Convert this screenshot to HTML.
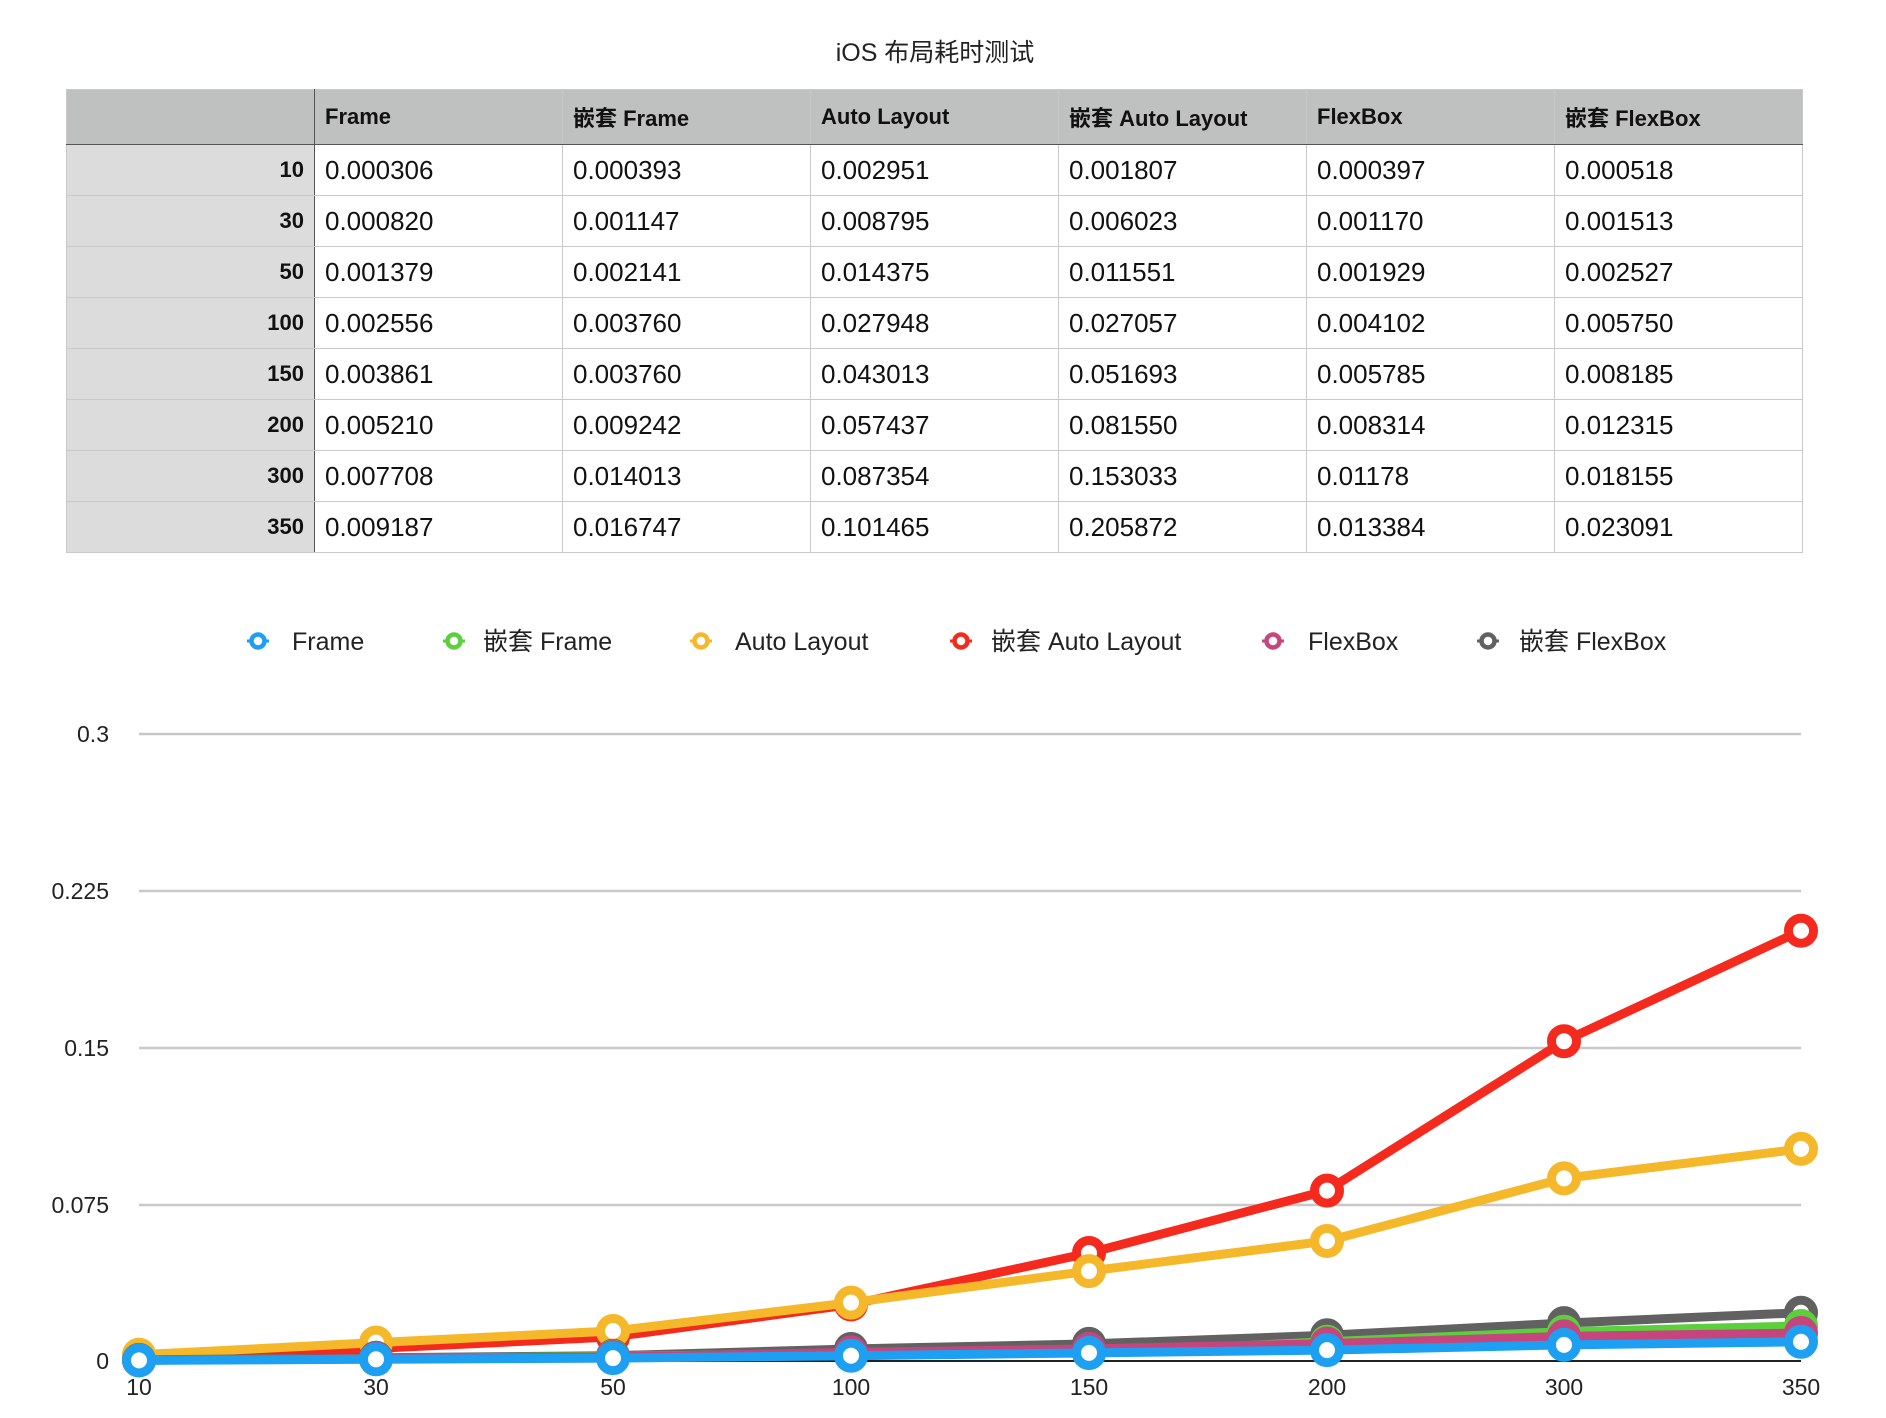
<!DOCTYPE html>
<html><head><meta charset="utf-8"><style>
body{margin:0;width:1886px;height:1418px;background:#fff;font-family:"Liberation Sans","Noto Sans CJK SC",sans-serif;position:relative;overflow:hidden}
.title{position:absolute;top:33px;left:0;width:1870px;text-align:center;font-size:25px;color:#222}
table{position:absolute;left:66px;top:89px;border-collapse:collapse;table-layout:fixed}
td{border:1px solid #c9c9c9;height:50px;font-size:26px;color:#111;padding:0 0 0 10px;width:237px}
td.r{background:#dcdcdc;text-align:right;padding:0 10px 0 0;font-weight:bold;font-size:22px;width:237px;border-right:1.5px solid #555}
tr.h td{background:#bfc1c0;height:54px;font-weight:bold;font-size:22px;border-bottom:1.5px solid #555;vertical-align:middle}
svg{position:absolute;left:0;top:0}
</style></head><body>
<div class="title">iOS 布局耗时测试</div>
<table id="t"></table>
<svg id="s" width="1886" height="1418" font-family="Liberation Sans, Noto Sans CJK SC, sans-serif"></svg>
<script>
var heads=["Frame","嵌套 Frame","Auto Layout","嵌套 Auto Layout","FlexBox","嵌套 FlexBox"];
var xs=[10,30,50,100,150,200,300,350];
var d=[[0.000306,0.000393,0.002951,0.001807,0.000397,0.000518],
[0.000820,0.001147,0.008795,0.006023,0.001170,0.001513],
[0.001379,0.002141,0.014375,0.011551,0.001929,0.002527],
[0.002556,0.003760,0.027948,0.027057,0.004102,0.005750],
[0.003861,0.003760,0.043013,0.051693,0.005785,0.008185],
[0.005210,0.009242,0.057437,0.081550,0.008314,0.012315],
[0.007708,0.014013,0.087354,0.153033,0.01178,0.018155],
[0.009187,0.016747,0.101465,0.205872,0.013384,0.023091]];
var s=["0.000306","0.000393","0.002951","0.001807","0.000397","0.000518","0.000820","0.001147","0.008795","0.006023","0.001170","0.001513","0.001379","0.002141","0.014375","0.011551","0.001929","0.002527","0.002556","0.003760","0.027948","0.027057","0.004102","0.005750","0.003861","0.003760","0.043013","0.051693","0.005785","0.008185","0.005210","0.009242","0.057437","0.081550","0.008314","0.012315","0.007708","0.014013","0.087354","0.153033","0.01178","0.018155","0.009187","0.016747","0.101465","0.205872","0.013384","0.023091"];
var h='<tr class="h"><td class="r" style="background:#bfc1c0"></td>';
heads.forEach(function(x){h+='<td>'+x+'</td>'});h+='</tr>';
for(var i=0;i<8;i++){h+='<tr><td class="r">'+xs[i]+'</td>';for(var j=0;j<6;j++)h+='<td>'+s[i*6+j]+'</td>';h+='</tr>';}
document.getElementById('t').innerHTML=h;
var cols=["#1d9ff2","#5ccf3c","#f4b82a","#f52a1e","#c6457c","#616161"];
var g='';
var gl=[[734,"0.3"],[891,"0.225"],[1048,"0.15"],[1205,"0.075"]];
gl.forEach(function(a){g+='<line x1="139" x2="1801" y1="'+a[0]+'" y2="'+a[0]+'" stroke="#c8c8c8" stroke-width="2.5"/><text x="109" y="'+(a[0]+8)+'" text-anchor="end" font-size="23" fill="#222">'+a[1]+'</text>'});
g+='<line x1="139" x2="1801" y1="1361" y2="1361" stroke="#222" stroke-width="2"/><text x="109" y="1369" text-anchor="end" font-size="23" fill="#222">0</text>';
var px=[139,376,613,851,1089,1327,1564,1801];
for(var i=0;i<8;i++)g+='<text x="'+px[i]+'" y="1395" text-anchor="middle" font-size="23" fill="#222">'+xs[i]+'</text>';
var order=[3,2,5,1,4,0];
order.forEach(function(k){var p='';for(var i=0;i<8;i++){var y=1361-d[i][k]*2090;p+=(i?'L':'M')+px[i]+' '+y.toFixed(1);}
g+='<path d="'+p+'" fill="none" stroke="'+cols[k]+'" stroke-width="9" stroke-linejoin="round"/>';
for(var i=0;i<8;i++){var y=1361-d[i][k]*2090;g+='<circle cx="'+px[i]+'" cy="'+y.toFixed(1)+'" r="12.5" fill="#fff" stroke="'+cols[k]+'" stroke-width="9"/>';}});
var li=[258,454,701,961,1273,1488],lt=[292,483,735,991,1308,1519];
for(var k=0;k<6;k++){g+='<line x1="'+(li[k]-11)+'" x2="'+(li[k]+11)+'" y1="641" y2="641" stroke="'+cols[k]+'" stroke-width="3"/><circle cx="'+li[k]+'" cy="641" r="6.5" fill="#fff" stroke="'+cols[k]+'" stroke-width="4.5"/><text x="'+lt[k]+'" y="650" font-size="25" fill="#222">'+heads[k]+'</text>';}
document.getElementById('s').innerHTML=g;
</script>
</body></html>
